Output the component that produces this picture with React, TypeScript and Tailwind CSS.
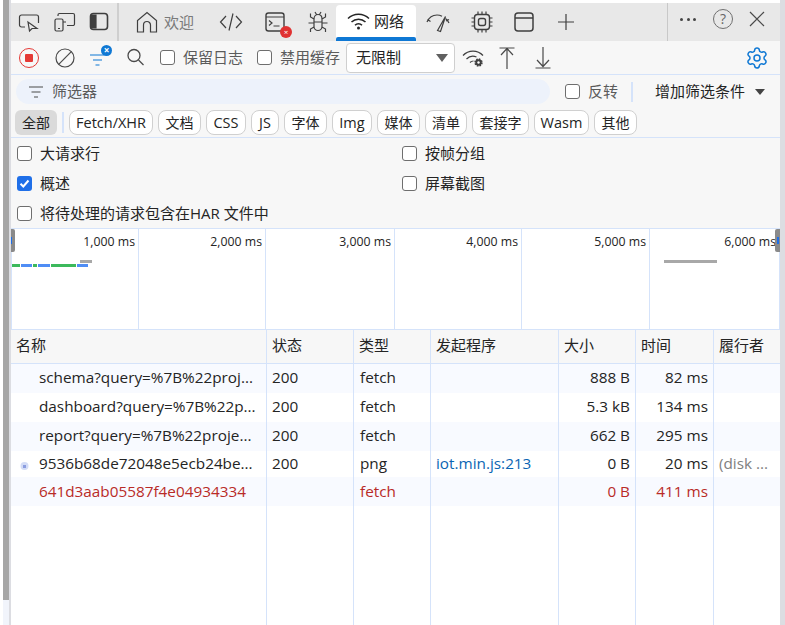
// App.tsx
/**
 * DevTools network panel
 */
import type { ReactNode } from 'react';
import { Settings } from 'lucide-react';

const font = 'font-["Open_Sans","Noto_Sans_CJK_SC",sans-serif]';

const chips = [
  { label: 'Fetch/XHR', cls: 'w-[84px] text-[14.500px]' },
  { label: '文档', cls: 'w-[43px] text-[14px]' },
  { label: 'CSS', cls: 'w-[40px] text-[14.500px]' },
  { label: 'JS', cls: 'w-[28px] text-[14.500px]' },
  { label: '字体', cls: 'w-[43px] text-[14px]' },
  { label: 'Img', cls: 'w-[40px] text-[14.500px]' },
  { label: '媒体', cls: 'w-[43px] text-[14px]' },
  { label: '清单', cls: 'w-[42px] text-[14px]' },
  { label: '套接字', cls: 'w-[57px] text-[14px]' },
  { label: 'Wasm', cls: 'w-[55px] text-[14.500px]' },
  { label: '其他', cls: 'w-[43px] text-[14px]' },
];

const ticks = ['1,000 ms', '2,000 ms', '3,000 ms', '4,000 ms', '5,000 ms', '6,000 ms'];

const columns = ['名称', '状态', '类型', '发起程序', '大小', '时间', '履行者'];

const gridCols = 'grid grid-cols-[256px_87px_77px_128px_77px_78px_67px]';

const rows = [
  { name: 'schema?query=%7B%22proj...', status: '200', type: 'fetch', init: '', size: '888 B', time: '82 ms', by: '', h: 'h-[29px]', pad: 'pb-[2px]', bg: 'bg-[#f8faff]' },
  { name: 'dashboard?query=%7B%22p...', status: '200', type: 'fetch', init: '', size: '5.3 kB', time: '134 ms', by: '', h: 'h-[29px]', pad: 'pb-[2px]', bg: 'bg-white' },
  { name: 'report?query=%7B%22proje...', status: '200', type: 'fetch', init: '', size: '662 B', time: '295 ms', by: '', h: 'h-[29px]', pad: 'pb-[2px]', bg: 'bg-[#f8faff]' },
  { name: '9536b68de72048e5ecb24be...', status: '200', type: 'png', init: 'iot.min.js:213', size: '0 B', time: '20 ms', by: '(disk ...', h: 'h-[26px]', pad: 'pb-[2px]', bg: 'bg-white', icon: true },
  { name: '641d3aab05587f4e04934334', status: '', type: 'fetch', init: '', size: '0 B', time: '411 ms', by: '', h: 'h-[29px]', pad: '', bg: 'bg-[#f8faff]', error: true },
];

function Check({ label, checked = false, className = '' }: { label: string; checked?: boolean; className?: string }) {
  return (
    <div className={`flex items-center gap-[8px] ${className}`}>
      {checked ? (
        <span className="flex h-[15px] w-[15px] items-center justify-center rounded-[3px] bg-[#1f6fe8]">
          <svg width="11" height="11" viewBox="0 0 11 11" fill="none" stroke="white" strokeWidth="2">
            <path d="M1.5 5.800 4.300 8.500 9.500 2.500" />
          </svg>
        </span>
      ) : (
        <span className="h-[15px] w-[15px] rounded-[3px] border border-[#6e6e6e] bg-white" />
      )}
      <span className="text-[15px] leading-none">{label}</span>
    </div>
  );
}

function TabIcon({ children }: { children: ReactNode }) {
  return (
    <svg className="block" width="24" height="24" viewBox="0 0 24 24" fill="none" stroke="#3f3f3f" strokeWidth="1.2">
      {children}
    </svg>
  );
}

export default function App() {
  return (
    <div className={`flex h-[625px] w-[785px] overflow-hidden bg-white text-[#242424] ${font}`}>
      {/* Window edge and scrollbar */}
      <div className="w-[3px] bg-white" />
      <div className="flex w-[6px] flex-col">
        <div className="h-[600px] bg-[#a6a6a6]" />
        <div className="flex-1 bg-[#f1f4fb]" />
      </div>
      <div className="w-[2px] bg-[#dcdde2]" />

      <div className="flex w-[769px] flex-col">
        {/* Tab bar */}
        <div className="h-[3px] bg-white" />
        <div className="flex h-[38px] items-center bg-[#e8e8e8]">
          <div className="flex h-full w-[108px] items-center gap-[11px] border-r-2 border-[#cfcfcf] pl-[6px]">
            <TabIcon>
              <path d="M8 17H4.500a2 2 0 0 1-2-2V7a2 2 0 0 1 2-2h15a2 2 0 0 1 2 2v6" />
              <path d="M11 12l1.500 9 2.500-2.500h5z" />
            </TabIcon>
            <TabIcon>
              <rect x="3" y="9" width="8" height="12" rx="1.500" />
              <path d="M6 6V5a1.500 1.500 0 0 1 1.500-1.500H21A1.500 1.500 0 0 1 22.500 5v9a1.500 1.500 0 0 1-1.500 1.500h-6M11 12h3M6 18.500h2" />
            </TabIcon>
            <TabIcon>
              <rect x="3.500" y="3.500" width="17" height="16" rx="3" strokeWidth="1.600" />
              <path d="M4 5h5v13H4z" fill="#3f3f3f" />
            </TabIcon>
          </div>
          <div className="ml-[16px] flex items-center gap-[5px] text-[15px] text-[#7a7a7a]">
            <TabIcon>
              <path d="M2.500 22V10.500L12 2.500l9.500 8V22h-6v-7a3.500 3.500 0 0 0-7 0v7z" />
            </TabIcon>
            <span>欢迎</span>
          </div>
          <div className="ml-[25px] flex">
            <TabIcon>
              <path d="M7 6 1.500 12 7 18M17 6l5.500 6L17 18M14 3.500 10 20.500" />
            </TabIcon>
          </div>
          <div className="relative ml-[21px] flex">
            <TabIcon>
              <rect x="2" y="3" width="18" height="18" rx="2.500" strokeWidth="1.400" />
              <path d="M2 7h18M5 10.500l3 2.500-3 2.500M9.500 16h6" />
            </TabIcon>
            <span className="absolute left-[16px] top-[16px] flex h-[12px] w-[12px] items-center justify-center rounded-full bg-[#e03131] text-[8px] leading-none text-white">
              ×
            </span>
          </div>
          <div className="ml-[18px] flex">
            <TabIcon>
              <path d="M8 9c0-6 8-6 8 0v7.500a4 4 0 0 1-8 0zM8 12h8M9 2l1.500 2.500M15 2l-1.500 2.500M8 9 4.500 7V3.500M16 9l3.500-2V3.500M8 13H2.500M16 13h5.500M8 17l-3.500 2v3M16 17l3.500 2v3" />
            </TabIcon>
          </div>
          {/* Active tab */}
          <div className="ml-[6px] flex h-[36px] w-[80px] flex-col self-end rounded-t-[4px] bg-white">
            <div className="flex flex-1 items-center gap-[4px] pl-[11px] text-[15px]">
              <svg width="23" height="18" viewBox="0 0 23 18" fill="none" stroke="#242424" strokeWidth="1.500">
                <path d="M1 6.500a15 15 0 0 1 21 0M4.500 10a10 10 0 0 1 14 0M8 13.300a5 5 0 0 1 7 0" />
                <circle cx="11.500" cy="16" r="1.500" fill="#242424" stroke="none" />
              </svg>
              <span>网络</span>
            </div>
            <div className="h-[4px] rounded-t-[2px] bg-[#0f78d4]" />
          </div>
          <div className="ml-[10px] flex">
            <TabIcon>
              <path d="M1 12C3 7.500 7 5 11 5c1.800 0 3.300.4 5 1.300M19.500 8.500c1.500 1.200 2.600 2.700 3.500 4.500M1.500 9.500 4.500 11.500M20 11l3-1.500" />
              <path d="M11.500 20.500 19.500 6.500 14.500 21.500z" />
            </TabIcon>
          </div>
          <div className="ml-[20px] flex">
            <TabIcon>
              <rect x="4.500" y="4.500" width="15" height="15" rx="3" strokeWidth="1.400" />
              <rect x="8.500" y="8.500" width="7" height="7" rx="2" strokeWidth="1.400" />
              <path d="M8 1.500v3M12 1.500v3M16 1.500v3M8 19.500v3M12 19.500v3M16 19.500v3M1.500 8h3M1.500 12h3M1.500 16h3M19.500 8h3M19.500 12h3M19.500 16h3" />
            </TabIcon>
          </div>
          <div className="ml-[18px] flex">
            <TabIcon>
              <rect x="3" y="3" width="18" height="18" rx="3" strokeWidth="1.500" />
              <path d="M3 8h18" strokeWidth="1.500" />
            </TabIcon>
          </div>
          <div className="ml-[18px] flex">
            <TabIcon>
              <path d="M12 4v16M4 12h16" />
            </TabIcon>
          </div>
          <div className="ml-auto flex h-full w-[113px] items-center border-l border-[#c8c8c8] pb-[6px] pl-[12px]">
            <span className="flex w-[16px] justify-between">
              <i className="h-[3px] w-[3px] rounded-full bg-[#444]" />
              <i className="h-[3px] w-[3px] rounded-full bg-[#444]" />
              <i className="h-[3px] w-[3px] rounded-full bg-[#444]" />
            </span>
            <span className="ml-[17px] flex h-[20px] w-[20px] items-center justify-center rounded-full border border-[#707070] text-[14px] leading-none text-[#666]">
              ?
            </span>
            <svg className="ml-[15px]" width="18" height="18" viewBox="0 0 18 18" fill="none" stroke="#4a4a4a" strokeWidth="1.200">
              <path d="M2 2l14 14M16 2 2 16" />
            </svg>
          </div>
        </div>

        {/* Toolbar */}
        <div className="flex h-[34px] items-center border-b border-[#d5e3fa] bg-[#f7f7f7] pl-[8px] text-[#5b5b5b]">
          <span className="flex h-[20px] w-[20px] items-center justify-center rounded-full border-[1.500px] border-[#e53935]">
            <span className="h-[8px] w-[8px] rounded-[1px] bg-[#e53935]" />
          </span>
          <svg className="ml-[16px]" width="20" height="20" viewBox="0 0 20 20" fill="none" stroke="#4a4a4a" strokeWidth="1.200">
            <circle cx="10" cy="10" r="9" />
            <path d="M3.700 16.300 16.300 3.700" />
          </svg>
          <span className="relative ml-[15px] block h-[20px] w-[21px]">
            <svg width="21" height="20" viewBox="0 0 21 20" fill="none" stroke="#0f78d4" strokeWidth="1.200">
              <path d="M0 7h14M3 12h9M5.500 17h4" />
            </svg>
            <span className="absolute right-[-1px] top-[-3px] flex h-[11px] w-[11px] items-center justify-center rounded-full bg-[#0f78d4] text-[10px] font-bold leading-none text-white">
              ×
            </span>
          </span>
          <svg className="ml-[15px]" width="19" height="19" viewBox="0 0 19 19" fill="none" stroke="#4a4a4a" strokeWidth="1.300">
            <circle cx="8" cy="7.500" r="6" />
            <path d="M12.500 12l5 5" />
          </svg>
          <Check label="保留日志" className="ml-[15px]" />
          <Check label="禁用缓存" className="ml-[14px]" />
          <div className="ml-[6px] flex h-[30px] w-[109px] items-center justify-between rounded-[4px] border border-[#cfcfcf] bg-white pl-[9px] pr-[6px] text-[15px] text-[#242424]">
            <span>无限制</span>
            <span className="h-0 w-0 border-x-[6.500px] border-t-[8px] border-x-transparent border-t-[#606060]" />
          </div>
          <svg className="ml-[7px]" width="22" height="20" viewBox="0 0 22 20" fill="none" stroke="#3f3f3f" strokeWidth="1.200">
            <path d="M1 7.500a13.500 13.500 0 0 1 20 0M4.500 11a9 9 0 0 1 10-2M8 14.500a5 5 0 0 1 3.500-1.500" />
            <circle cx="16.500" cy="14.500" r="3.200" fill="#3f3f3f" stroke="#3f3f3f" strokeWidth="2" strokeDasharray="1.500 1" />
            <circle cx="16.500" cy="14.500" r="1.200" fill="white" stroke="none" />
          </svg>
          <svg className="ml-[14px]" width="18" height="22" viewBox="0 0 18 22" fill="none" stroke="#4a4a4a" strokeWidth="1.200">
            <path d="M1.500 1h15M9 22V1.500M3 8l6-6.500L15 8" />
          </svg>
          <svg className="ml-[18px]" width="18" height="22" viewBox="0 0 18 22" fill="none" stroke="#4a4a4a" strokeWidth="1.200">
            <path d="M1.500 21h15M9 0v19M3 13l6 6.500 6-6.500" />
          </svg>
          <Settings className="ml-[193px] h-[24px] w-[24px] text-[#0f78d4]" strokeWidth={1.500} />
        </div>

        {/* Filter row */}
        <div className="flex h-[33px] items-center bg-[#f7f7f7] pl-[5px]">
          <div className="flex h-[25px] w-[534px] items-center gap-[9px] rounded-full bg-[#edf2fb] pl-[13px] text-[15px] text-[#5b5b5b]">
            <svg width="14" height="12" viewBox="0 0 14 12" fill="none" stroke="#4a4a4a" strokeWidth="1.200">
              <path d="M0 1h14M2.500 6h9M5 11h4" />
            </svg>
            <span>筛选器</span>
          </div>
          <div className="ml-[15px] flex items-center gap-[8px] text-[15px] text-[#5b5b5b]">
            <span className="h-[15px] w-[15px] rounded-[3px] border border-[#6e6e6e] bg-white" />
            <span>反转</span>
          </div>
          <div className="ml-[13px] h-[20px] w-[2px] bg-[#d5e3fa]" />
          <div className="ml-[22px] flex items-center gap-[10px] text-[15px]">
            <span>增加筛选条件</span>
            <span className="h-0 w-0 border-x-[5px] border-t-[6px] border-x-transparent border-t-[#444]" />
          </div>
        </div>

        {/* Type chips */}
        <div className="flex h-[30px] items-start border-b border-[#d5e3fa] bg-[#f7f7f7] pl-[4px] pt-[2px] text-[14px]">
          <span className="flex h-[25px] w-[42px] items-center justify-center rounded-[6px] bg-[#dadada]">全部</span>
          <span className="ml-[5px] mr-[5px] mt-[2px] h-[21px] w-[2px] bg-[#d5e3fa]" />
          <div className="flex gap-[5px]">
            {chips.map((c) => (
              <span key={c.label} className={`flex h-[25px] items-center justify-center rounded-[8px] border border-[#d0d0d0] bg-white ${c.cls}`}>
                {c.label}
              </span>
            ))}
          </div>
        </div>

        {/* Options */}
        <div className="flex h-[91px] flex-col border-b border-[#d5e3fa] bg-[#f7f7f7] pl-[6px]">
          <div className="grid h-[30px] grid-cols-[385px_1fr] items-center">
            <Check label="大请求行" />
            <Check label="按帧分组" />
          </div>
          <div className="grid h-[30px] grid-cols-[385px_1fr] items-center">
            <Check label="概述" checked />
            <Check label="屏幕截图" />
          </div>
          <div className="flex h-[30px] items-center">
            <Check label="将待处理的请求包含在HAR 文件中" />
          </div>
        </div>

        {/* Overview timeline */}
        <div className="relative grid h-[101px] grid-cols-[128px_127px_129px_127px_128px_130px] border-b border-[#d5e3fa] bg-white text-[12.300px]">
          {ticks.map((t) => (
            <div key={t} className="border-r border-[#d5e3fa] pr-[3px] pt-[4px] text-right leading-[18px] last:border-r-[2px] last:border-[#a8c7fa]">
              {t}
            </div>
          ))}
          <span className="absolute bottom-0 left-0 top-0 w-[1px] bg-[#d5e3fa]" />
          {/* Handles */}
          <span className="absolute left-0 top-0 h-[23px] w-[4px] rounded-r-[2px] bg-[#8a8a8a]" />
          <span className="absolute left-0 top-[8px] h-[7px] w-[1px] bg-[#1f6fe8]" />
          <span className="absolute right-0 top-0 h-[23px] w-[5px] rounded-l-[2px] bg-[#8a8a8a]" />
          <span className="absolute right-[1px] top-[8px] h-[7px] w-[2px] bg-[#1f6fe8]" />
          {/* Waterfall */}
          <span className="absolute left-[1px] top-[35px] h-[3px] w-[8px] bg-[#3cb95c]" />
          <span className="absolute left-[10px] top-[35px] h-[3px] w-[11px] bg-[#4f8df5]" />
          <span className="absolute left-[22px] top-[35px] h-[3px] w-[4px] bg-[#3cb95c]" />
          <span className="absolute left-[27px] top-[35px] h-[3px] w-[12px] bg-[#4f8df5]" />
          <span className="absolute left-[40px] top-[35px] h-[3px] w-[25px] bg-[#3cb95c]" />
          <span className="absolute left-[66px] top-[35px] h-[3px] w-[11px] bg-[#4f8df5]" />
          <span className="absolute left-[69px] top-[31px] h-[3px] w-[12px] bg-[#a8a8a8]" />
          <span className="absolute left-[653px] top-[31px] h-[3px] w-[53px] bg-[#a8a8a8]" />
        </div>

        {/* Table header */}
        <div className={`${gridCols} h-[34px] border-b border-[#d5e3fa] bg-[#f7f7f7] text-[15px]`}>
          {columns.map((c) => (
            <div key={c} className="flex items-center border-r border-[#d5e3fa] pb-[2px] pl-[5px] last:border-r-0">
              {c}
            </div>
          ))}
        </div>

        {/* Table rows */}
        {rows.map((r) => (
          <div key={r.name} className={`${gridCols} ${r.h} ${r.bg} text-[15.300px] ${r.error ? 'text-[#b92b27]' : ''}`}>
            <div className={`flex items-center overflow-hidden whitespace-nowrap border-r border-[#d5e3fa] pl-[28px] ${r.pad}`}>
              {r.icon && (
                <svg className="-ml-[19px] mr-[10px] mt-[4px] shrink-0" width="9" height="9" viewBox="0 0 9 9">
                  <circle cx="4.500" cy="5" r="4" fill="#d3dcf6" />
                  <rect x="3" y="4" width="3" height="3" fill="#8b9de0" />
                </svg>
              )}
              {r.name}
            </div>
            <div className={`flex items-center border-r border-[#d5e3fa] pl-[5px] ${r.pad}`}>{r.status}</div>
            <div className={`flex items-center border-r border-[#d5e3fa] pl-[6px] ${r.pad}`}>{r.type}</div>
            <div className={`flex items-center border-r border-[#d5e3fa] pl-[5px] text-[#0b65b3] ${r.pad}`}>{r.init}</div>
            <div className={`flex items-center justify-end border-r border-[#d5e3fa] pr-[5px] ${r.pad}`}>{r.size}</div>
            <div className={`flex items-center justify-end border-r border-[#d5e3fa] pr-[5px] ${r.pad}`}>{r.time}</div>
            <div className={`flex items-center pl-[5px] text-[#808080] ${r.pad}`}>{r.by}</div>
          </div>
        ))}
        <div className={`${gridCols} flex-1 bg-white`}>
          {columns.map((c) => (
            <div key={c} className="border-r border-[#d5e3fa] last:border-r-0" />
          ))}
        </div>
      </div>

      <div className="w-[5px] bg-[#dcdde2]" />
    </div>
  );
}
